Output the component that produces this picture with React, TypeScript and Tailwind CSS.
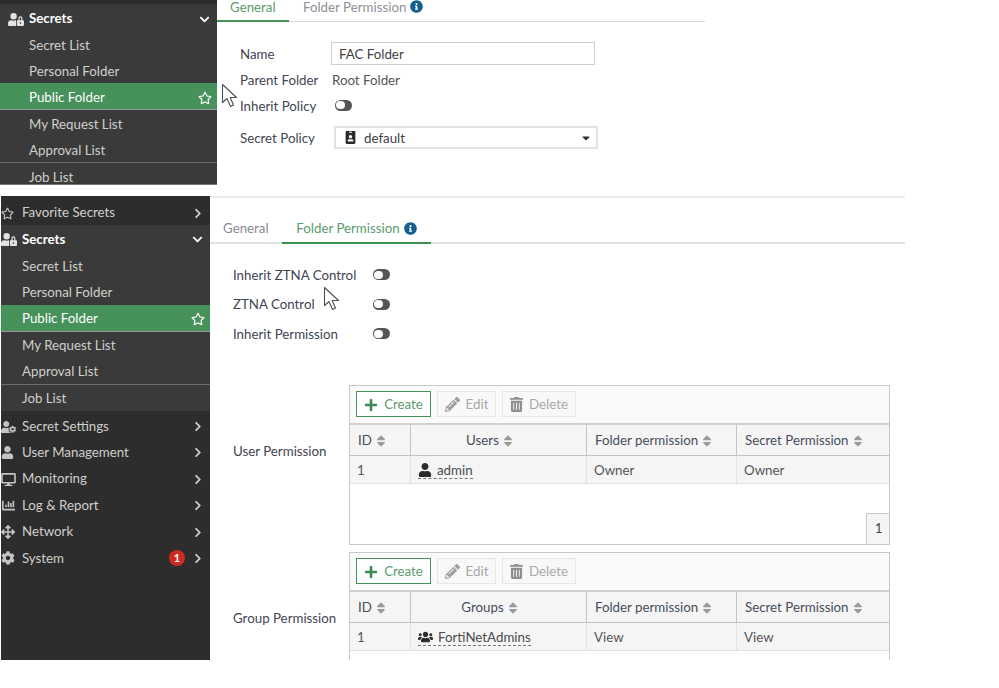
import React from "react";
import {
  FaArrowsAlt,
  FaCaretDown,
  FaChartBar,
  FaChevronDown,
  FaChevronRight,
  FaCog,
  FaDesktop,
  FaIdBadge,
  FaInfoCircle,
  FaPencilAlt,
  FaPlus,
  FaRegStar,
  FaSort,
  FaTrashAlt,
  FaUser,
  FaUserCog,
  FaUserLock,
  FaUsers,
} from "react-icons/fa";

const Cursor = ({ className }: { className: string }) => (
  <svg className={className} width="18" height="26" viewBox="0 0 18 26">
    <path
      d="M1.5 1.5 L1.5 19.5 L6 15.5 L9.5 23.5 L12.5 22 L9.2 14.5 L15.5 14.5 Z"
      fill="#fff"
      stroke="#4a4f57"
      strokeWidth="1.1"
      strokeLinejoin="round"
    />
  </svg>
);

const Toggle = () => (
  <div className="w-[17px] h-[11px] rounded-full bg-[#555] flex items-center pl-[1px]">
    <div className="w-[9px] h-[8px] rounded-full bg-white" />
  </div>
);

const SubItem = ({ label, last }: { label: string; last?: boolean }) => (
  <div
    className={`h-[26.4px] flex items-center pl-[21px] pt-[2px] text-[#cfcfcb] ${
      last ? "border-b border-[#6b6b6b]" : ""
    }`}
  >
    {label}
  </div>
);

const ActiveItem = ({ pad }: { pad: string }) => (
  <div
    className={`h-[27px] flex items-center justify-between bg-[#47915a] border-b border-[#9a9a9a] text-white ${pad} pr-[5px]`}
  >
    <span>Public Folder</span>
    <FaRegStar className="w-[14px] h-[14px] text-white" />
  </div>
);

const TopItem = ({
  icon,
  label,
  badge,
}: {
  icon: React.ReactNode;
  label: string;
  badge?: boolean;
}) => (
  <div className="h-[26.4px] flex items-center pt-[2px] text-[#cfcfcb]">
    <span className="w-[21px] flex justify-start text-[#c4c4c4]">{icon}</span>
    <span className="flex-1">{label}</span>
    {badge && (
      <span className="w-[16px] h-[16px] rounded-full bg-[#cf2a20] text-white text-[11px] font-bold flex items-center justify-center mr-[9px]">
        1
      </span>
    )}
    <FaChevronRight className="w-[8px] h-[11px] text-[#d0d0d0] mr-[8px]" />
  </div>
);

const SecretsHead = ({ pad }: { pad: string }) => (
  <div className={`h-[26.4px] flex items-center text-white font-bold ${pad}`}>
    <FaUserLock className="w-[16px] h-[13px] text-[#e2e2e2] mr-[5px] shrink-0" />
    <span className="flex-1">Secrets</span>
    <FaChevronDown className="w-[11px] h-[11px] text-white mr-[7px]" />
  </div>
);

const FormRow = ({
  label,
  className,
  children,
}: {
  label: string;
  className: string;
  children: React.ReactNode;
}) => (
  <div className={`flex items-center ${className}`}>
    <span className="w-[91px] pt-[2px] text-[#3f4552] shrink-0">{label}</span>
    {children}
  </div>
);

const ToggleRow = ({ label }: { label: string }) => (
  <div className="h-[29.5px] flex items-center">
    <span className="w-[140px] pt-[2px] text-[#3f4552]">{label}</span>
    <Toggle />
  </div>
);

const ToolButton = ({
  icon,
  label,
  className,
}: {
  icon: React.ReactNode;
  label: string;
  className: string;
}) => (
  <div
    className={`h-[26px] flex items-center justify-center gap-[6px] pt-[1px] border border-[#e6e6e6] bg-[#f8f8f8] text-[#a8a8a8] ${className}`}
  >
    {icon}
    {label}
  </div>
);

const SortIcon = () => <FaSort className="w-[10px] h-[14px] text-[#9a9a9a] ml-[4px]" />;

const Head = ({ label, center, last }: { label: string; center?: boolean; last?: boolean }) => (
  <div
    className={`flex items-center pt-[2px] pl-[8px] text-[#474d5a] ${center ? "justify-center pr-[26px]" : "pr-[8px]"} ${
      last ? "" : "border-r border-[#c4c4c4]"
    }`}
  >
    {label}
    <SortIcon />
  </div>
);

const Cell = ({ children, last }: { children: React.ReactNode; last?: boolean }) => (
  <div className={`flex items-center pt-[3px] px-[7px] text-[#555] ${last ? "" : "border-r border-[#e2e2e2]"}`}>
    {children}
  </div>
);

const PermissionTable = ({
  title,
  nameHead,
  icon,
  name,
  value,
  boxClass,
  footer,
}: {
  title: string;
  nameHead: string;
  icon: React.ReactNode;
  name: string;
  value: string;
  boxClass: string;
  footer?: boolean;
}) => (
  <div className="flex">
    <div className="w-[116px] shrink-0 text-[#3f4552] pt-[57px]">{title}</div>
    <div className={`w-[541px] flex flex-col border border-[#c8c8c8] ${boxClass}`}>
      <div className="h-[39px] shrink-0 flex items-center gap-[6px] pl-[6px] bg-[#fafafa] border-b-2 border-[#d0d0d0]">
        <div className="w-[75px] h-[26px] flex items-center justify-center gap-[6px] pt-[1px] border border-[#47915a] bg-white text-[#5a9c6c]">
          <FaPlus className="w-[14px] h-[14px] text-[#3f8a52]" />
          Create
        </div>
        <ToolButton
          className="w-[59px]"
          label="Edit"
          icon={<FaPencilAlt className="w-[15px] h-[15px] text-[#a0a0a0]" />}
        />
        <ToolButton
          className="w-[74px]"
          label="Delete"
          icon={<FaTrashAlt className="w-[13px] h-[15px] text-[#8f8f8f]" />}
        />
      </div>
      <div className="h-[31px] shrink-0 grid grid-cols-[61px_176px_150px_1fr] bg-[#f5f5f5] border-b border-[#c4c4c4]">
        <Head label="ID" />
        <Head label={nameHead} center />
        <Head label="Folder permission" />
        <Head label="Secret Permission" last />
      </div>
      <div className="h-[28px] shrink-0 grid grid-cols-[61px_176px_150px_1fr] bg-[#f5f5f5] border-b border-[#e2e2e2]">
        <Cell>1</Cell>
        <Cell>
          <span className="flex items-center gap-[5px] border-b border-dashed border-[#777] leading-[15px] text-[#4b4b4b]">
            {icon}
            {name}
          </span>
        </Cell>
        <Cell>{value}</Cell>
        <Cell last>{value}</Cell>
      </div>
      {footer && (
        <div className="mt-auto flex justify-end">
          <div className="w-[23px] h-[31px] flex items-center justify-center pl-[1px] bg-[#f5f5f5] border-l border-t border-[#c8c8c8] text-[#444]">
            1
          </div>
        </div>
      )}
    </div>
  </div>
);

export default function App() {
  return (
    <div className="relative w-[999px] h-[688px] overflow-hidden bg-white text-[13.3px] font-['Lato','Liberation_Sans',sans-serif]">
      {/* Top crop: General tab */}
      <div className="flex h-[185px]">
        <aside className="w-[217px] h-full bg-[#3a3a3a] overflow-hidden border-t-[4px] border-[#2c2c2c] border-b border-b-[#777] shrink-0">
          <SecretsHead pad="pl-[8px] pt-[4px]" />
          <div className="[&>div]:pl-[29px] [&>div]:pt-[4px]">
            <SubItem label="Secret List" />
            <SubItem label="Personal Folder" />
          </div>
          <ActiveItem pad="pl-[29px] pt-[3px]" />
          <div className="[&>div]:pl-[29px] [&>div]:pt-[4px]">
            <SubItem label="My Request List" />
            <SubItem label="Approval List" last />
            <SubItem label="Job List" />
          </div>
        </aside>
        <main className="w-[488px]">
          <div className="h-[22px] flex border-b border-[#d8d8d8]">
            <div className="w-[72px] h-[22px] border-b-2 border-[#47915a] pl-[13px] text-[#5a9c6c] leading-[14px]">
              General
            </div>
            <div className="pl-[14px] text-[#8f8f99] leading-[14px] flex items-start">
              Folder Permission
              <FaInfoCircle className="w-[13px] h-[13px] text-[#14608f] ml-[4px]" />
            </div>
          </div>
          <div className="pl-[23px] pt-[20px]">
            <FormRow label="Name" className="h-[23px]">
              <div className="w-[264px] h-[23px] flex items-center pl-[7px] pt-[2px] border border-[#cfcfcf] text-[#3f3f3f]">
                FAC Folder
              </div>
            </FormRow>
            <FormRow label="Parent Folder" className="h-[26px] mt-[2px]">
              <span className="ml-[1px] pt-[2px] text-[#555]">Root Folder</span>
            </FormRow>
            <FormRow label="Inherit Policy" className="h-[26px]">
              <span className="ml-[4px] mb-[2px]">
                <Toggle />
              </span>
            </FormRow>
            <FormRow label="Secret Policy" className="h-[23px] mt-[7px]">
              <div className="ml-[3px] w-[264px] h-[23px] flex items-center pl-[9px] pr-[4px] border-2 border-[#e2e2e2] text-[#3f3f3f]">
                <FaIdBadge className="w-[11px] h-[13px] text-[#2b2b2b] mr-[8px]" />
                <span className="flex-1 pt-[2px]">default</span>
                <FaCaretDown className="w-[12px] h-[12px] text-[#333]" />
              </div>
            </FormRow>
          </div>
        </main>
      </div>

      {/* Bottom crop: Folder Permission tab */}
      <div className="flex h-[464px] mt-[11px] pl-[1px]">
        <aside className="w-[209px] h-full bg-[#2d2d2d] shrink-0 flex flex-col">
          <div className="h-[29px] pt-[3px] shrink-0">
            <TopItem icon={<FaRegStar className="w-[13px] h-[13px]" />} label="Favorite Secrets" />
          </div>
          <div className="bg-[#3a3a3a] border-b border-[#2d2d2d]">
            <div className="mb-[1px]">
              <SecretsHead pad="pt-[3px]" />
            </div>
            <SubItem label="Secret List" />
            <SubItem label="Personal Folder" />
            <ActiveItem pad="pl-[21px] pt-[2px]" />
            <SubItem label="My Request List" />
            <SubItem label="Approval List" last />
            <SubItem label="Job List" />
          </div>
          <TopItem icon={<FaUserCog className="w-[15px] h-[12px]" />} label="Secret Settings" />
          <TopItem icon={<FaUser className="w-[13px] h-[13px]" />} label="User Management" />
          <TopItem icon={<FaDesktop className="w-[15px] h-[13px]" />} label="Monitoring" />
          <TopItem icon={<FaChartBar className="w-[15px] h-[13px]" />} label="Log & Report" />
          <TopItem icon={<FaArrowsAlt className="w-[14px] h-[14px]" />} label="Network" />
          <TopItem icon={<FaCog className="w-[14px] h-[14px]" />} label="System" badge />
        </aside>
        <main className="w-[695px]">
          <div className="h-[2px] bg-[#ececec]" />
          <div className="h-[46px] flex border-b-2 border-[#e2e2e2]">
            <div className="pl-[13px] w-[72px] pt-[21px] text-[#8a8a90]">General</div>
            <div className="h-[46px] w-[149px] pt-[21px] flex items-start justify-center border-b-2 border-[#3f8f50] text-[#5a9c6c]">
              Folder Permission
              <FaInfoCircle className="w-[13px] h-[13px] text-[#14608f] ml-[4px] mt-[3px]" />
            </div>
          </div>
          <div className="pl-[23px] pt-[16px]">
            <ToggleRow label="Inherit ZTNA Control" />
            <ToggleRow label="ZTNA Control" />
            <ToggleRow label="Inherit Permission" />
            <div className="mt-[36px] flex flex-col gap-[7px]">
              <PermissionTable
                title="User Permission"
                nameHead="Users"
                icon={<FaUser className="w-[14px] h-[14px] text-[#2b2b2b]" />}
                name="admin"
                value="Owner"
                boxClass="h-[160px]"
                footer
              />
              <PermissionTable
                title="Group Permission"
                nameHead="Groups"
                icon={<FaUsers className="w-[15px] h-[12px] text-[#2b2b2b]" />}
                name="FortiNetAdmins"
                value="View"
                boxClass="h-[108px] border-b-0"
              />
            </div>
          </div>
        </main>
      </div>

      <Cursor className="absolute left-[221px] top-[83px]" />
      <Cursor className="absolute left-[323px] top-[286px]" />
    </div>
  );
}
